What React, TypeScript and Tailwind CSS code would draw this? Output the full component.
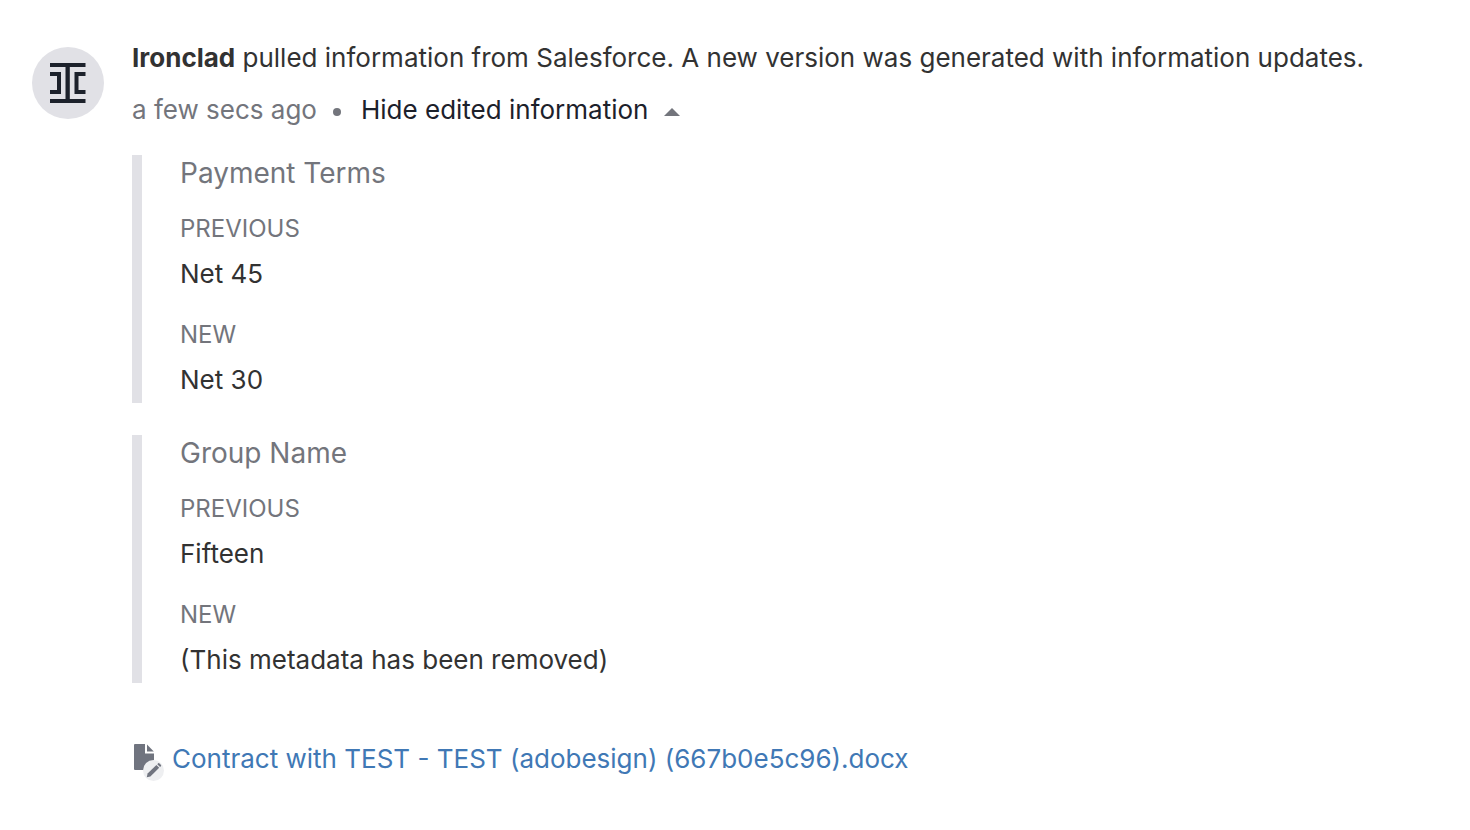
import { useState } from "react";

type Change = {
  field: string;
  previous: string;
  next: string;
};

const changes: Change[] = [
  { field: "Payment Terms", previous: "Net 45", next: "Net 30" },
  {
    field: "Group Name",
    previous: "Fifteen",
    next: "(This metadata has been removed)",
  },
];

function IroncladLogo() {
  return (
    <svg viewBox="0 0 72 72" className="w-full h-full" fill="#1c212b" aria-hidden="true">
      <path d="M18 16h35.500v4h-15.700v32h15.700v4H18v-4h15.500V20H18z" />
      <path d="M18 25h11v22H18v-4h7V29h-7z" />
      <path d="M53.500 25h-11v22h11v-4h-7V29h7z" />
    </svg>
  );
}

function EditedFileIcon() {
  return (
    <svg viewBox="0 0 32 38" className="w-8 h-[38px] shrink-0" aria-hidden="true">
      <path fill="#70747f" d="M3 1H13v9.500h9V27H3Q2 27 2 26V2Q2 1 3 1z" />
      <path fill="#70747f" d="M15 1.500l6.800 7H15z" />
      <circle cx="21.500" cy="27.500" r="10.500" fill="#eeeff1" />
      <path fill="#70747f" d="M14.800 34.200l.8-3.600 8.800-8.600 2.800 2.800-8.800 8.600z" />
      <path fill="#70747f" d="M25.300 21.200l.9-.9q.5-.4 1 0l1.800 1.800q.4.500 0 1l-.9.900z" />
    </svg>
  );
}

function ChangeBlock({ field, previous, next }: Change) {
  return (
    <section
      aria-label={field}
      className="border-l-[10px] border-[#e1e1e6] pl-[38px] pb-0.5"
    >
      <h3 className="text-[28px] leading-9 text-[#73757c]">{field}</h3>
      <dl className="mt-[22px]">
        <dt className="text-2xl text-[#73757c]">PREVIOUS</dt>
        <dd className="mt-2 text-[26px] leading-[42px]">{previous}</dd>
        <dt className="mt-6 text-2xl text-[#73757c]">NEW</dt>
        <dd className="mt-2 text-[26px] leading-[42px]">{next}</dd>
      </dl>
    </section>
  );
}

export default function App() {
  const [open, setOpen] = useState(true);

  return (
    <main className="min-h-screen bg-white px-8 pt-[39px] pb-10 font-['Inter',sans-serif] text-[26px] text-[#323232]">
      <article className="flex items-start gap-7">
        <div className="mt-2 w-18 h-18 shrink-0 rounded-full bg-[#e1e1e6]">
          <IroncladLogo />
        </div>
        <div className="min-w-0 flex-1">
          <p className="leading-[38px]">
            <strong className="font-bold">Ironclad</strong> pulled information
            from Salesforce. A new version was generated with information
            updates.
          </p>
          <div className="mt-3.5 flex items-center leading-[38px]">
            <span className="text-[#73757c]">a few secs ago</span>
            <span className="ml-4 mr-5 mt-1 w-2 h-2 rounded-full bg-[#73757c]"></span>
            <button
              aria-expanded={open}
              onClick={() => setOpen(!open)}
              className="flex items-center gap-4 text-[#1c212b] cursor-pointer"
            >
              Hide edited information
              <svg
                viewBox="0 0 16 8"
                className={`mt-1 w-4 h-2 ${open ? "" : "rotate-180"}`}
                aria-hidden="true"
              >
                <path d="M8 0l8 8H0z" fill="#73757c" />
              </svg>
            </button>
          </div>
          {open && (
            <div className="mt-[26px] flex flex-col gap-8">
              {changes.map((change) => (
                <ChangeBlock key={change.field} {...change} />
              ))}
            </div>
          )}
          <a
            href="#contract"
            className="mt-[60px] inline-flex items-start gap-2 leading-8 text-[#4078b5]"
          >
            <EditedFileIcon />
            Contract with TEST - TEST (adobesign) (667b0e5c96).docx
          </a>
        </div>
      </article>
    </main>
  );
}
